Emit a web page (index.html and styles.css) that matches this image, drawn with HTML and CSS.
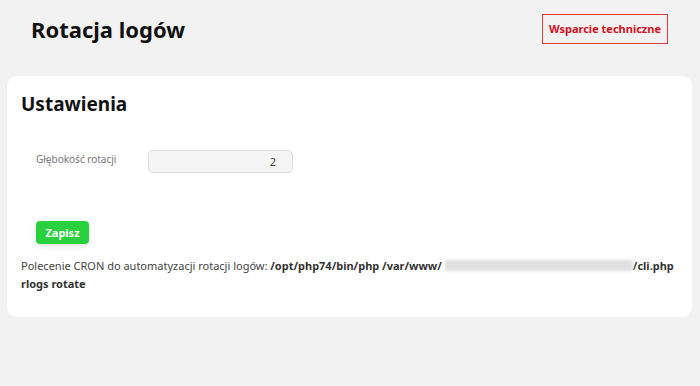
FILE: index.html
```html
<!DOCTYPE html>
<html lang="pl">
<head>
  <meta charset="UTF-8">
  <meta name="viewport" content="width=device-width, initial-scale=1.0">
  <title>Rotacja logów</title>
  <link rel="stylesheet" href="styles.css">
</head>
<body>
  <header class="top">
    <h1>Rotacja logów</h1>
    <a class="support" href="#">Wsparcie techniczne</a>
  </header>

  <div class="card">
    <h2>Ustawienia</h2>

    <!-- Settings form -->
    <form class="settings">
      <div class="row">
        <label for="depth">Głębokość rotacji</label>
        <input type="text" id="depth" value="2">
      </div>
      <button type="button" class="save">Zapisz</button>
    </form>

    <p class="cron">Polecenie CRON do automatyzacji rotacji logów: <b>/opt/php74/bin/php /var/www/<span class="hidden"></span>/cli.php rlogs rotate</b></p>
  </div>
</body>
</html>
```

FILE: styles.css
```css
body {
  margin: 0;
  padding: 0 8px;
  background: #f2f2f2;
  font-family: 'Noto Sans', 'Open Sans', sans-serif;
  color: #444;
}
.top {
  display: flex;
  justify-content: space-between;
  align-items: flex-start;
  padding: 14px 24px 0 23px;
  height: 62px;
}
.top h1 {
  margin: 0;
  font-size: 22px;
  line-height: 30px;
  color: #111;
  font-weight: bold;
}
.support {
  display: block;
  border: 1px solid #e03a3a;
  color: #d4101c;
  font-size: 11px;
  font-weight: bold;
  text-decoration: none;
  padding: 7px 6px;
  line-height: 14px;
}
.card {
  background: #fff;
  border-radius: 10px;
  padding: 14px 14px 24px;
  width: 657px;
  margin-left: -1px;
}
.card h2 {
  margin: 0;
  font-size: 19px;
  line-height: 28px;
  color: #111;
}
.settings {
  padding: 32px 0 0 15px;
}
.row {
  display: flex;
  align-items: flex-start;
}
.row label {
  width: 112px;
  font-size: 10px;
  color: #777;
  line-height: 18px;
}
.row input {
  width: 145px;
  height: 23px;
  box-sizing: border-box;
  border: 1px solid #ddd;
  border-radius: 5px;
  background: #f5f5f5;
  text-align: right;
  padding: 0 16px;
  font-family: inherit;
  font-size: 11px;
  color: #444;
}
.save {
  margin-top: 48px;
  background: #2ad13f;
  color: #fff;
  border: none;
  border-radius: 4px;
  font-family: inherit;
  font-weight: bold;
  font-size: 11px;
  width: 53px;
  height: 23px;
  padding: 0;
  box-shadow: 0 2px 6px rgba(0, 0, 0, 0.12);
}
.cron {
  margin: 13px 0 0;
  font-size: 11px;
  line-height: 18px;
}
.cron b {
  color: #333;
}
.hidden {
  display: inline-block;
  width: 188px;
  height: 11px;
  margin-left: 3px;
  vertical-align: -1px;
  background: #e0e0e0;
  filter: blur(1.5px);
}
```
